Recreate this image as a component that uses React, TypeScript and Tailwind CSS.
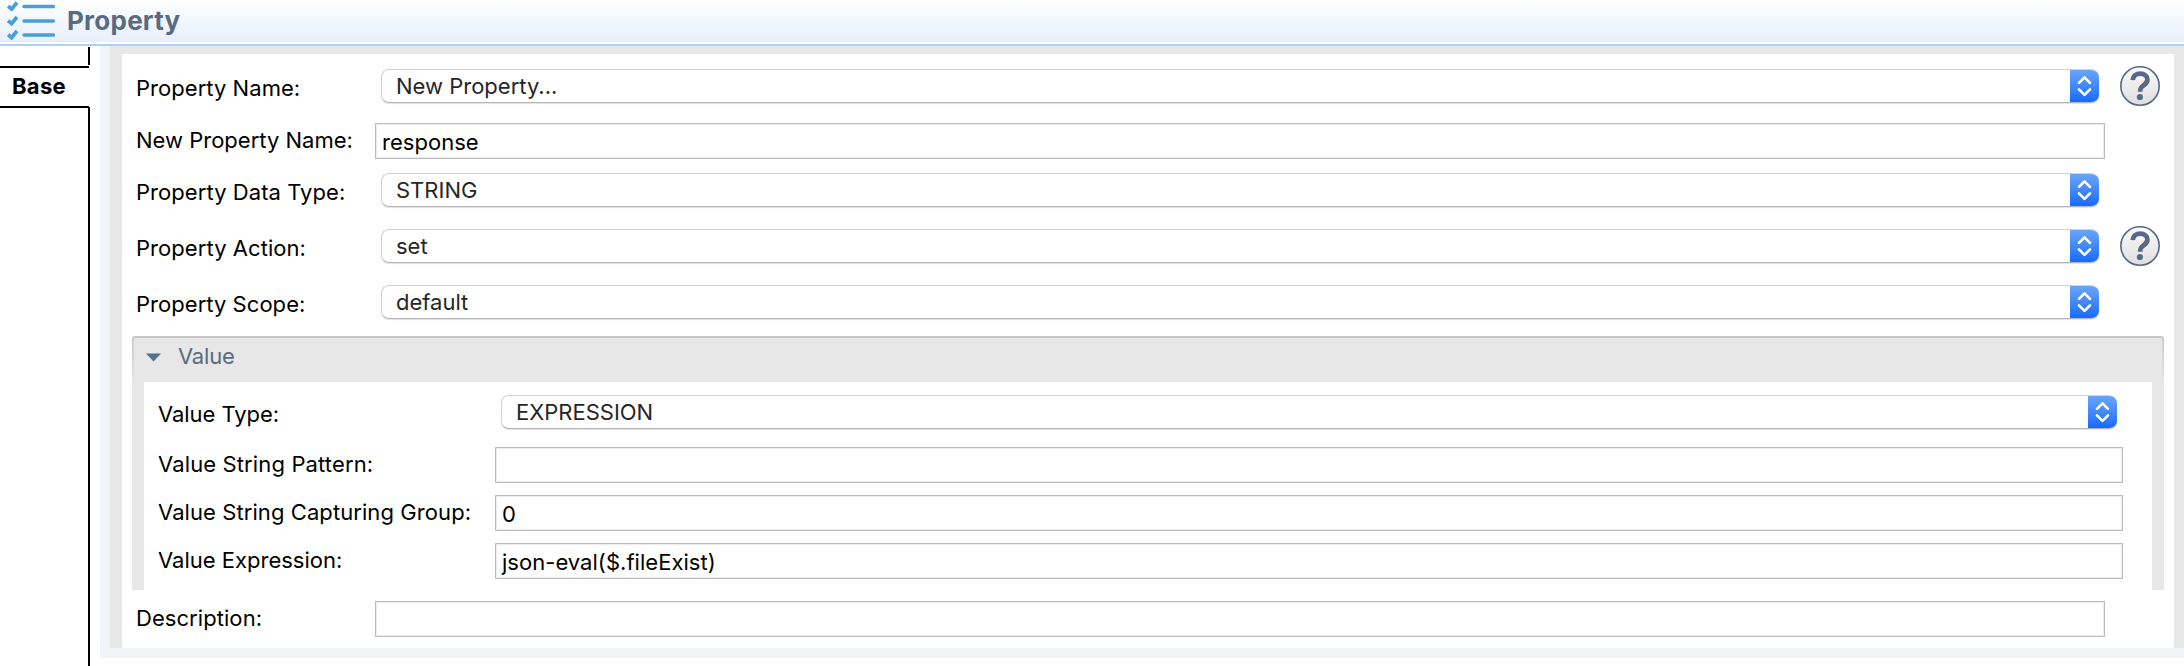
import type { ReactNode } from 'react';

function ChecklistIcon() {
  return (
    <svg className="h-[42px] w-[50px] shrink-0" viewBox="0 0 50 42" fill="none" stroke="#4a9fd8">
      {[6.5, 21, 35].map((y) => (
        <g key={y}>
          <path d={`M1 ${y - 0.3}L4.6 ${y + 2.6}L10 ${y - 4}`} strokeWidth="3.8" />
          <path d={`M17 ${y}H46.5`} strokeWidth="3.4" strokeLinecap="round" />
        </g>
      ))}
    </svg>
  );
}

function HelpIcon({ className }: { className: string }) {
  return (
    <svg className={`size-10 shrink-0 ${className}`} viewBox="0 0 40 40" fill="none">
      <defs>
        <linearGradient id="help" x1="0" y1="0" x2="0" y2="1">
          <stop offset="0" stopColor="#fbfbfb" />
          <stop offset="1" stopColor="#dedede" />
        </linearGradient>
      </defs>
      <circle cx="20" cy="20" r="19.2" fill="url(#help)" stroke="#566a87" strokeWidth="1.6" />
      <path
        d="M12.7 14.2C13 10 16 7.7 20.2 7.7C24.4 7.7 27.4 9.9 27.4 13.6C27.4 16.4 25.8 17.8 23.8 19.2C21.3 21 20.1 22 20.1 25.8"
        stroke="#566a87"
        strokeWidth="4.8"
      />
      <circle cx="19.9" cy="31" r="3.1" fill="#566a87" />
    </svg>
  );
}

function Label({ children, className }: { children: ReactNode; className: string }) {
  return <label className={`shrink-0 whitespace-nowrap leading-7 ${className}`}>{children}</label>;
}

function Select({ value }: { value: string }) {
  return (
    <div className="ml-1.5 flex h-[34px] min-w-0 flex-1 overflow-hidden rounded-[8px] border border-[#d2d2d2] border-r-0 border-b-[#b4b4b4] bg-white shadow-[0_1px_1px_rgba(0,0,0,0.12)]">
      <span className="flex-1 pt-0.5 pl-[14px] leading-7 text-[#262626]">{value}</span>
      <span className="-my-px flex h-[34px] w-[29px] items-center justify-center bg-linear-to-b from-[#6ba6f8] to-[#0f68fb]">
        <svg className="size-full" viewBox="0 0 29 34" fill="none" stroke="#fff" strokeWidth="2.6" strokeLinecap="round" strokeLinejoin="round">
          <path d="M9 13.8L14.5 8.3L20 13.8M9 20.3L14.5 25.8L20 20.3" />
        </svg>
      </span>
    </div>
  );
}

function Input({ value = '' }: { value?: string }) {
  return (
    <div className="h-9 min-w-0 flex-1 border border-[#bcbcbc] bg-white pt-1 pl-[6px] leading-7 tracking-[0.03px] text-black shadow-[inset_0_0_0_1px_#ececec]">
      {value}
    </div>
  );
}

export default function App() {
  return (
    <div className="flex h-[666px] w-[2184px] flex-col overflow-hidden bg-white font-['Inter',sans-serif] text-[22px] text-black">
      <header className="flex h-[46px] shrink-0 flex-col border-b-2 border-[#b0d0f5]">
        <div className="flex h-[42px] items-start bg-linear-to-b from-white to-[#e6effb] pl-[7px]">
          <ChecklistIcon />
          <h1 className="pt-[5px] pl-2.5 text-[26px] leading-8 font-bold tracking-[0.25px] text-[#596b83]">Property</h1>
        </div>
      </header>

      <div className="flex min-h-0 flex-1">
        <nav className="flex w-[90px] shrink-0 flex-col pt-px">
          <div className="h-[18px] border-r-2 border-black" />
          <div className="mt-px flex h-[42px] w-[89px] border-y-2 border-black pt-1 pl-3 leading-7 font-bold tracking-[0.3px]">Base</div>
          <div className="-mt-px flex-1 border-r-2 border-black" />
        </nav>

        <main className="ml-[10px] h-[612px] flex-1 border-b-10 border-l-10 border-[#f2f4f7]">
          <div className="h-[602px] border-t-8 border-r-10 border-l-12 border-[#e7e7e7] bg-white">
            <div className="flex flex-col pt-[15px]">
              <div className="flex h-[54px] pl-3.5">
                <Label className="w-[239px] pt-[5px] tracking-[0.04px]">Property Name:</Label>
                <Select value="New Property..." />
                <HelpIcon className="mt-[-3px] mr-3.5 ml-[21px]" />
              </div>
              <div className="flex h-[50px] pr-[69px] pl-3.5">
                <Label className="w-[239px] pt-[3px]">New Property Name:</Label>
                <Input value="response" />
              </div>
              <div className="flex h-14 pr-[75px] pl-3.5">
                <Label className="w-[239px] pt-[5px] tracking-[0.06px]">Property Data Type:</Label>
                <Select value="STRING" />
              </div>
              <div className="flex h-14 pl-3.5">
                <Label className="w-[239px] pt-[5px] tracking-[0.06px]">Property Action:</Label>
                <Select value="set" />
                <HelpIcon className="mt-[-3px] mr-3.5 ml-[21px]" />
              </div>
              <div className="flex h-[51px] pr-[75px] pl-3.5">
                <Label className="w-[239px] pt-[5px] tracking-[0.04px]">Property Scope:</Label>
                <Select value="default" />
              </div>

              <section className="mx-2.5 flex h-[254px] flex-col rounded-t-[3px] border-t-2 border-[#c6c6c6] bg-[#e7e7e7]">
                <div className="flex h-11 justify-between">
                  <span className="w-0.5 bg-linear-to-b from-[#cacaca] to-[#e7e7e7]" />
                  <div className="flex flex-1 items-start pt-1 pl-3 text-[#5a6a80]">
                    <svg className="mt-[11px] h-[9px] w-[15px]" viewBox="0 0 15 9">
                      <path d="M0 .5H15L7.5 8.5Z" fill="#566f8b" />
                    </svg>
                    <span className="pl-[17px] leading-7 tracking-[-0.2px]">Value</span>
                  </div>
                  <span className="w-0.5 bg-linear-to-b from-[#cacaca] to-[#e7e7e7]" />
                </div>
                <div className="mx-3 flex h-[208px] flex-col bg-white pt-[13px] pl-3.5">
                  <div className="flex h-[52px] pr-[35px]">
                    <Label className="w-[337px] pt-[5px] tracking-[-0.05px]">Value Type:</Label>
                    <Select value="EXPRESSION" />
                  </div>
                  <div className="flex h-12 pr-[29px]">
                    <Label className="w-[337px] pt-[3px] tracking-[0.13px]">Value String Pattern:</Label>
                    <Input />
                  </div>
                  <div className="flex h-12 pr-[29px]">
                    <Label className="w-[337px] pt-[3px] tracking-[0.08px]">Value String Capturing Group:</Label>
                    <Input value="0" />
                  </div>
                  <div className="flex h-9 pr-[29px]">
                    <Label className="w-[337px] pt-[3px]">Value Expression:</Label>
                    <Input value="json-eval($.fileExist)" />
                  </div>
                </div>
              </section>

              <div className="mt-[11px] flex h-9 pr-[69px] pl-3.5">
                <Label className="w-[239px] pt-[3px] tracking-[0.06px]">Description:</Label>
                <Input />
              </div>
            </div>
          </div>
        </main>
      </div>
    </div>
  );
}
